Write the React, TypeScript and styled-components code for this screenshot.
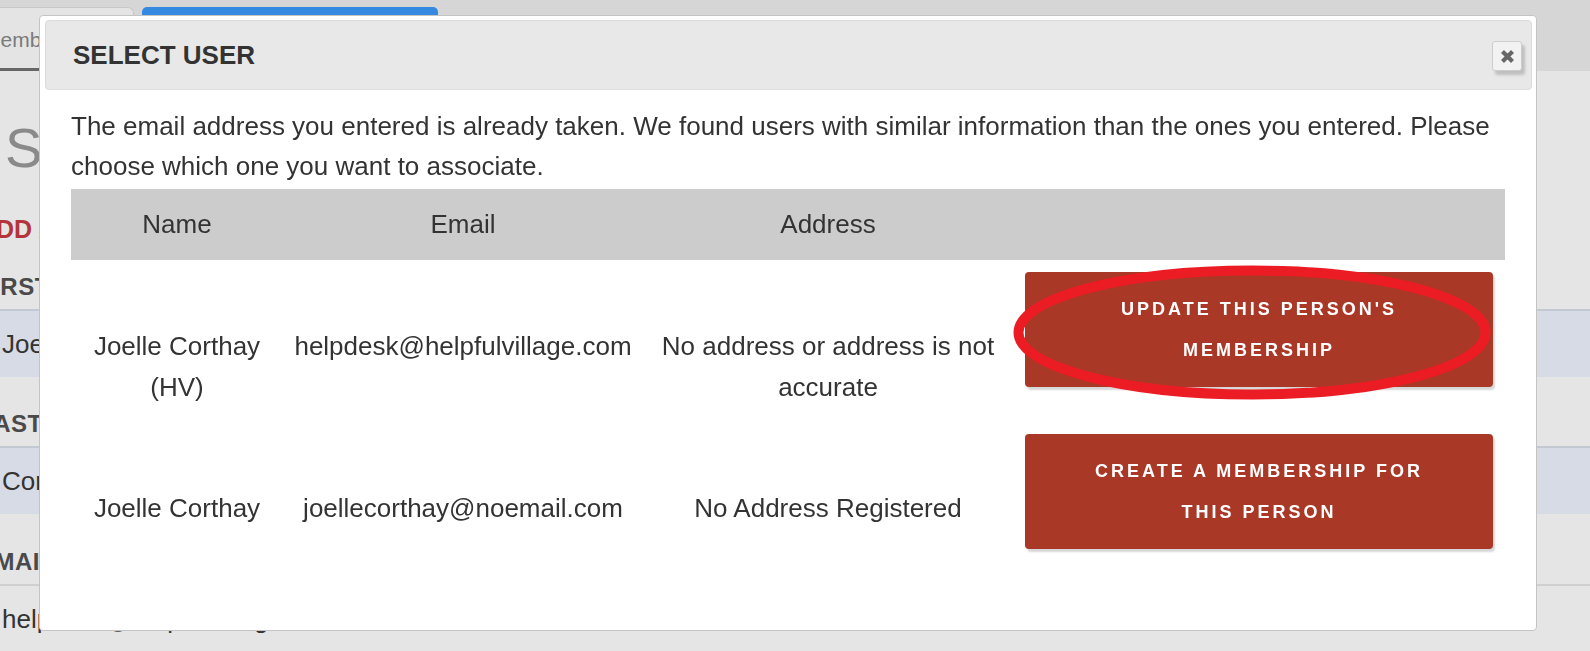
import React from "react";
import styled, { createGlobalStyle } from "styled-components";

const GlobalStyle = createGlobalStyle`
    html, body {
        margin: 0;
        padding: 0;
    }
    body {
        font-family: "Liberation Sans", Arial, sans-serif;
        color: #333;
        background: #e5e5e5;
    }
`;

const Page = styled.div`
    width: 100vw;
    height: 100vh;
    overflow: hidden;
    background: #e5e5e5;
`;

const TopBar = styled.div`
    height: 71px;
    background: #d6d6d6;
    display: flex;
    align-items: flex-end;
    gap: 8px;
`;

const Tab = styled.div<{ $active?: boolean }>`
    box-sizing: border-box;
    height: 64px;
    display: flex;
    align-items: center;
    font-size: 21px;
    border-radius: 0 6px 0 0;
    ${(p) =>
        p.$active
            ? `
        width: 176px;
        margin-left: -42px;
        padding: 3px 0 0 24px;
        background: #e4e4e4;
        color: #7a7a7a;
        border: 1px solid #c8c8c8;
        border-bottom: 3px solid #666;
    `
            : `
        width: 296px;
        background: #3589e0;
        color: #fff;
        border-radius: 5px 5px 0 0;
        justify-content: center;
    `}
`;

const Content = styled.div`
    padding-left: 5px;
`;

const PageTitle = styled.h1`
    margin: 43px 0 0;
    font-size: 56px;
    line-height: 67px;
    font-weight: normal;
    color: #8a8a8a;
`;

const FormColumn = styled.div`
    margin-left: -27px;
    display: flex;
    flex-direction: column;
`;

const SectionTitle = styled.div`
    margin-top: 33px;
    font-size: 25px;
    line-height: 30px;
    font-weight: bold;
    color: #b3343a;
`;

const FieldLabel = styled.div<{ $gap: number }>`
    margin-top: ${(p) => p.$gap}px;
    font-size: 24px;
    line-height: 30px;
    font-weight: bold;
    color: #4a4a4a;
    letter-spacing: 0.5px;
`;

const FieldInput = styled.div<{ $filled?: boolean }>`
    box-sizing: border-box;
    margin-top: 7px;
    height: 68px;
    padding: 0 24px;
    display: flex;
    align-items: center;
    font-size: 26px;
    color: #333;
    border-top: 2px solid ${(p) => (p.$filled ? "#c4c8d2" : "#cfcfcf")};
    background: ${(p) => (p.$filled ? "#d7dbe5" : "transparent")};
`;

const Overlay = styled.div`
    position: fixed;
    inset: 0;
    padding: 15px 0 0 39px;
`;

const Modal = styled.div`
    box-sizing: border-box;
    width: 1498px;
    height: 616px;
    background: #fff;
    border: 1px solid #c4c4c4;
    border-radius: 4px;
    display: flex;
    flex-direction: column;
`;

const ModalHeader = styled.div`
    box-sizing: border-box;
    height: 70px;
    margin: 4px 4px 0 5px;
    padding: 0 9px 0 27px;
    display: flex;
    align-items: center;
    justify-content: space-between;
    background: #e8e8e8;
    border: 1px solid #dcdcdc;
    border-radius: 4px;
`;

const ModalTitle = styled.h3`
    margin: 0;
    font-size: 26px;
    font-weight: bold;
    color: #333;
`;

const CloseButton = styled.button`
    box-sizing: border-box;
    width: 30px;
    height: 30px;
    margin-top: 2px;
    padding: 0;
    display: flex;
    align-items: center;
    justify-content: center;
    background: #f2f2f2;
    border: 1px solid #cdcdcd;
    border-radius: 3px;
    box-shadow: 3px 4px 3px rgba(0, 0, 0, 0.18);
    cursor: pointer;
`;

const ModalBody = styled.div`
    padding: 16px 31px;
`;

const Intro = styled.p`
    margin: 0;
    font-size: 26px;
    line-height: 40px;
    color: #333;
`;

const Grid = styled.div`
    display: grid;
    grid-template-columns: 212px 360px 370px 1fr;
`;

const HeadRow = styled(Grid)`
    margin-top: 3px;
    height: 71px;
    align-items: center;
    background: #cccccc;
`;

const HeadCell = styled.div`
    text-align: center;
    font-size: 26px;
    color: #333;
`;

const Row = styled(Grid)`
    padding: 12px 0 14px;
    align-items: start;
`;

const Cell = styled.div`
    padding-top: 54px;
    text-align: center;
    font-size: 26px;
    line-height: 41px;
    color: #333;
`;

const ActionCell = styled.div`
    position: relative;
    padding: 0 12px;
`;

const ActionButton = styled.button`
    box-sizing: border-box;
    width: 100%;
    height: 115px;
    padding: 16px 44px;
    background: #a93826;
    color: #fff;
    border: none;
    border-radius: 4px;
    box-shadow: 2px 3px 2px rgba(0, 0, 0, 0.16);
    font-family: "Liberation Sans", Arial, sans-serif;
    font-size: 18px;
    font-weight: bold;
    line-height: 41px;
    letter-spacing: 3px;
    text-transform: uppercase;
    cursor: pointer;
`;

const Highlight = styled.svg`
    position: absolute;
    left: 0;
    top: -7px;
    pointer-events: none;
    overflow: visible;
`;

const CloseIcon = () => (
    <svg width="15" height="15" viewBox="0 0 15 15">
        <path d="M2.5 2.5 L12.5 12.5 M12.5 2.5 L2.5 12.5" stroke="#666" strokeWidth="4.2" strokeLinecap="butt" />
    </svg>
);

const users = [
    {
        name: "Joelle Corthay (HV)",
        email: "helpdesk@helpfulvillage.com",
        address: "No address or address is not accurate",
        action: "Update this person's membership",
        circled: true,
    },
    {
        name: "Joelle Corthay",
        email: "joellecorthay@noemail.com",
        address: "No Address Registered",
        action: "Create a membership for this person",
        circled: false,
    },
];

export default function App() {
    return (
        <>
            <GlobalStyle />
            <Page>
                <TopBar>
                    <Tab $active>Members</Tab>
                    <Tab>Add Member</Tab>
                </TopBar>
                <Content>
                    <PageTitle>Select Member</PageTitle>
                    <FormColumn>
                        <SectionTitle>ADD A HOUSEHOLD MEMBER</SectionTitle>
                        <FieldLabel $gap={28}>FIRST NAME</FieldLabel>
                        <FieldInput $filled>Joelle</FieldInput>
                        <FieldLabel $gap={32}>LAST NAME</FieldLabel>
                        <FieldInput $filled>Corthay</FieldInput>
                        <FieldLabel $gap={33}>EMAIL</FieldLabel>
                        <FieldInput>helpdesk@helpfulvillage.com</FieldInput>
                    </FormColumn>
                </Content>
            </Page>

            <Overlay>
                <Modal>
                    <ModalHeader>
                        <ModalTitle>SELECT USER</ModalTitle>
                        <CloseButton aria-label="Close">
                            <CloseIcon />
                        </CloseButton>
                    </ModalHeader>
                    <ModalBody>
                        <Intro>
                            The email address you entered is already taken. We found users with similar
                            information than the ones you entered. Please choose which one you want to associate.
                        </Intro>
                        <HeadRow>
                            <HeadCell>Name</HeadCell>
                            <HeadCell>Email</HeadCell>
                            <HeadCell>Address</HeadCell>
                            <HeadCell />
                        </HeadRow>
                        {users.map((u) => (
                            <Row key={u.email}>
                                <Cell>{u.name}</Cell>
                                <Cell>{u.email}</Cell>
                                <Cell>{u.address}</Cell>
                                <ActionCell>
                                    <ActionButton>{u.action}</ActionButton>
                                    {u.circled && (
                                        <Highlight width="478" height="135" viewBox="0 0 478 135">
                                            <ellipse
                                                cx="239"
                                                cy="67.5"
                                                rx="233.5"
                                                ry="62"
                                                fill="none"
                                                stroke="#ec1c24"
                                                strokeWidth="10"
                                            />
                                        </Highlight>
                                    )}
                                </ActionCell>
                            </Row>
                        ))}
                    </ModalBody>
                </Modal>
            </Overlay>
        </>
    );
}
